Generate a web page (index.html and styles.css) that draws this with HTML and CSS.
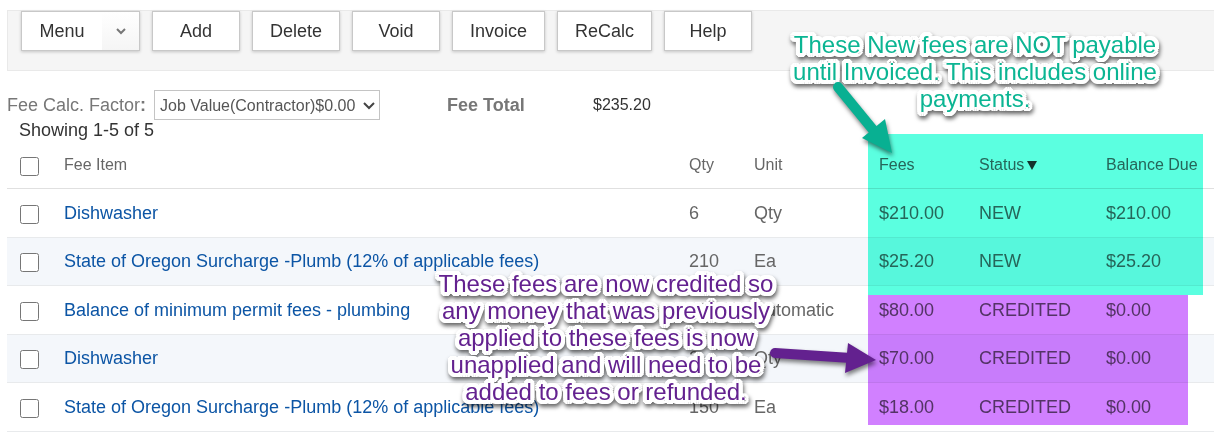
FILE: index.html
```
<!DOCTYPE html>
<html lang="en">
<head>
    <meta charset="utf-8">
    <title>Fee Items</title>
    <link rel="stylesheet" href="styles.css">
</head>
<body>
    <div class="page">
        <div class="toolbar">
            <button class="menu" type="button">
                <span class="menu-label">Menu</span>
                <span class="menu-arrow">
                    <svg width="10" height="7" viewBox="0 0 10 7"><path d="M1 1 L5 5 L9 1" fill="none" stroke="#777" stroke-width="2"/></svg>
                </span>
            </button>
            <button type="button">Add</button>
            <button type="button">Delete</button>
            <button type="button">Void</button>
            <button type="button">Invoice</button>
            <button type="button">ReCalc</button>
            <button type="button">Help</button>
        </div>

        <div class="summary">
            <label for="factor">Fee Calc. Factor<b>:</b></label>
            <div class="select">
                <select id="factor">
                    <option>Job Value(Contractor)$0.00</option>
                </select>
                <svg width="12" height="8" viewBox="0 0 12 8"><path d="M1 1 L6 6 L11 1" fill="none" stroke="#444" stroke-width="2"/></svg>
            </div>
            <b class="total-label">Fee Total</b>
            <span class="total">$235.20</span>
        </div>
        <div class="showing">Showing 1-5 of 5</div>

        <div class="fees">
            <table>
                <colgroup>
                    <col class="col-check">
                    <col>
                    <col class="col-qty">
                    <col class="col-unit">
                    <col class="col-fees">
                    <col class="col-status">
                    <col class="col-balance">
                </colgroup>
                <thead>
                    <tr>
                        <th><input type="checkbox" aria-label="Select all"></th>
                        <th>Fee Item</th>
                        <th>Qty</th>
                        <th>Unit</th>
                        <th>Fees</th>
                        <th>Status<svg class="sort" width="10" height="9" viewBox="0 0 10 9"><path d="M0 0 H10 L5 9 Z" fill="#333"/></svg></th>
                        <th>Balance Due</th>
                    </tr>
                </thead>
                <tbody>
                    <tr>
                        <td><input type="checkbox" aria-label="Select Dishwasher"></td>
                        <td><a href="#">Dishwasher</a></td>
                        <td>6</td>
                        <td>Qty</td>
                        <td>$210.00</td>
                        <td>NEW</td>
                        <td>$210.00</td>
                    </tr>
                    <tr>
                        <td><input type="checkbox" aria-label="Select State of Oregon Surcharge"></td>
                        <td><a href="#">State of Oregon Surcharge -Plumb (12% of applicable fees)</a></td>
                        <td>210</td>
                        <td>Ea</td>
                        <td>$25.20</td>
                        <td>NEW</td>
                        <td>$25.20</td>
                    </tr>
                    <tr>
                        <td><input type="checkbox" aria-label="Select Balance of minimum permit fees"></td>
                        <td><a href="#">Balance of minimum permit fees - plumbing</a></td>
                        <td>80</td>
                        <td>Automatic</td>
                        <td>$80.00</td>
                        <td>CREDITED</td>
                        <td>$0.00</td>
                    </tr>
                    <tr>
                        <td><input type="checkbox" aria-label="Select Dishwasher"></td>
                        <td><a href="#">Dishwasher</a></td>
                        <td>2</td>
                        <td>Qty</td>
                        <td>$70.00</td>
                        <td>CREDITED</td>
                        <td>$0.00</td>
                    </tr>
                    <tr>
                        <td><input type="checkbox" aria-label="Select State of Oregon Surcharge"></td>
                        <td><a href="#">State of Oregon Surcharge -Plumb (12% of applicable fees)</a></td>
                        <td>150</td>
                        <td>Ea</td>
                        <td>$18.00</td>
                        <td>CREDITED</td>
                        <td>$0.00</td>
                    </tr>
                </tbody>
            </table>

            <!-- callouts over the table -->
            <div class="highlight highlight-new"></div>
            <div class="highlight highlight-credited"></div>
            <p class="note note-new">These New fees are NOT payable<br>until Invoiced. This includes online<br>payments.</p>
            <p class="note note-credited">These fees are now credited so<br>any money that was previously<br>applied to these fees is now<br>unapplied and will need to be<br>added to fees or refunded.</p>
            <svg class="arrow arrow-new" width="70" height="80" viewBox="0 0 70 80">
                <path d="M8 7 L44 51" stroke="#08b092" stroke-width="10" stroke-linecap="round"/>
                <path d="M62 73 L32 58 L55 39 Z" fill="#08b092"/>
            </svg>
            <svg class="arrow arrow-credited" width="120" height="40" viewBox="0 0 120 40">
                <path d="M10 13 L86 18" stroke="#63218f" stroke-width="10" stroke-linecap="round"/>
                <path d="M111 20 L83 3 L80 33 Z" fill="#63218f"/>
            </svg>
        </div>
    </div>
</body>
</html>
```
FILE: styles.css
```
* {
    box-sizing: border-box;
}

body {
    margin: 0;
    background: #fff;
    color: #333;
    font-family: "Liberation Sans", Arial, sans-serif;
    font-size: 18px;
    overflow-x: hidden;
}

.page {
    padding: 10px 0 0 7px;
}

.toolbar {
    display: flex;
    gap: 12px;
    align-items: flex-start;
    height: 61px;
    padding-left: 13px;
    background: #f5f5f5;
    border: 1px solid #e9e9e9;
    border-right: none;
}

.toolbar button {
    min-width: 88px;
    height: 40px;
    padding: 0 17px;
    background: #fff;
    border: 1px solid #c8c8c8;
    box-shadow: 0 1px 3px rgba(0,0,0,0.2);
    color: #333;
    font-family: inherit;
    font-size: 18px;
    cursor: pointer;
}

.toolbar button:hover {
    background: #f8f8f8;
}

.toolbar .menu {
    display: flex;
    width: 119px;
    padding: 0;
}

.menu-label {
    flex: 1;
    align-self: center;
}

.menu-arrow {
    display: flex;
    align-items: center;
    justify-content: center;
    width: 37px;
    height: 100%;
    background: linear-gradient(#fff, #f5f5f5);
}

.summary {
    display: flex;
    align-items: center;
    height: 30px;
    margin-top: 19px;
    color: #777;
}

.summary label {
    width: 147px;
}

.select {
    position: relative;
    width: 226px;
    height: 30px;
}

.select select {
    width: 100%;
    height: 100%;
    padding: 0 5px;
    appearance: none;
    background: #fff;
    border: 1px solid #c4c4c4;
    border-radius: 0;
    color: #555;
    font-family: inherit;
    font-size: 16px;
}

.select svg {
    position: absolute;
    right: 5px;
    top: 12px;
    pointer-events: none;
}

.total-label {
    width: 146px;
    margin-left: 67px;
}

.total {
    color: #333;
    font-size: 16px;
}

.showing {
    padding-left: 12px;
    line-height: 20px;
}

.fees {
    position: relative;
}

table {
    width: 100%;
    table-layout: fixed;
    border-collapse: separate;
    border-spacing: 0;
}

.col-check { width: 57px; }
.col-qty { width: 65px; }
.col-unit { width: 125px; }
.col-fees { width: 100px; }
.col-status { width: 127px; }
.col-balance { width: 108px; }

th,
td {
    height: 49px;
    padding: 0;
    border-bottom: 1px solid #e8eaec;
    color: #666;
    text-align: left;
    white-space: nowrap;
}

th {
    padding-top: 2px;
    border-color: #e0e0e0;
    font-size: 16px;
    font-weight: normal;
}

tbody tr:nth-child(even) td {
    height: 48px;
    background: #f4f7fb;
}

td:first-child,
th:first-child {
    padding-left: 13px;
}

input[type="checkbox"] {
    display: block;
    width: 19px;
    height: 19px;
    margin: 2px 0 0;
}

a {
    color: #0c55a5;
    text-decoration: none;
}

a:hover {
    text-decoration: underline;
}

.sort {
    margin-left: 3px;
}

.highlight {
    position: absolute;
    mix-blend-mode: multiply;
    pointer-events: none;
}

.highlight-new {
    top: -6px;
    right: 11px;
    width: 335px;
    height: 161px;
    background: #5bffe0;
}

.highlight-credited {
    top: 155px;
    right: 26px;
    width: 320px;
    height: 130px;
    background: #d180ff;
}

/* round white outline built from a ring of shadows */
.note {
    position: absolute;
    margin: 0;
    font-size: 24px;
    line-height: 27px;
    text-align: center;
    white-space: nowrap;
    text-shadow:
        4px 0 #fff, 4px 2px #fff, 3px 3px #fff, 2px 4px #fff,
        0 4px #fff, -2px 4px #fff, -3px 3px #fff, -4px 2px #fff,
        -4px 0 #fff, -4px -2px #fff, -3px -3px #fff, -2px -4px #fff,
        0 -4px #fff, 2px -4px #fff, 3px -3px #fff, 4px -2px #fff,
        2px 0 #fff, 0 2px #fff, -2px 0 #fff, 0 -2px #fff;
    filter: drop-shadow(1px 3px 2px rgba(0,0,0,0.6));
    pointer-events: none;
}

.note-new {
    top: -109px;
    right: 39px;
    width: 400px;
    color: #0bb593;
}

.note-credited {
    top: 130px;
    right: 408px;
    width: 400px;
    color: #63218f;
}

.arrow {
    position: absolute;
    filter: drop-shadow(1px 3px 2px rgba(0,0,0,0.5));
    pointer-events: none;
}

.arrow-new {
    top: -60px;
    right: 314px;
}

.arrow-credited {
    top: 200px;
    right: 329px;
}
```
